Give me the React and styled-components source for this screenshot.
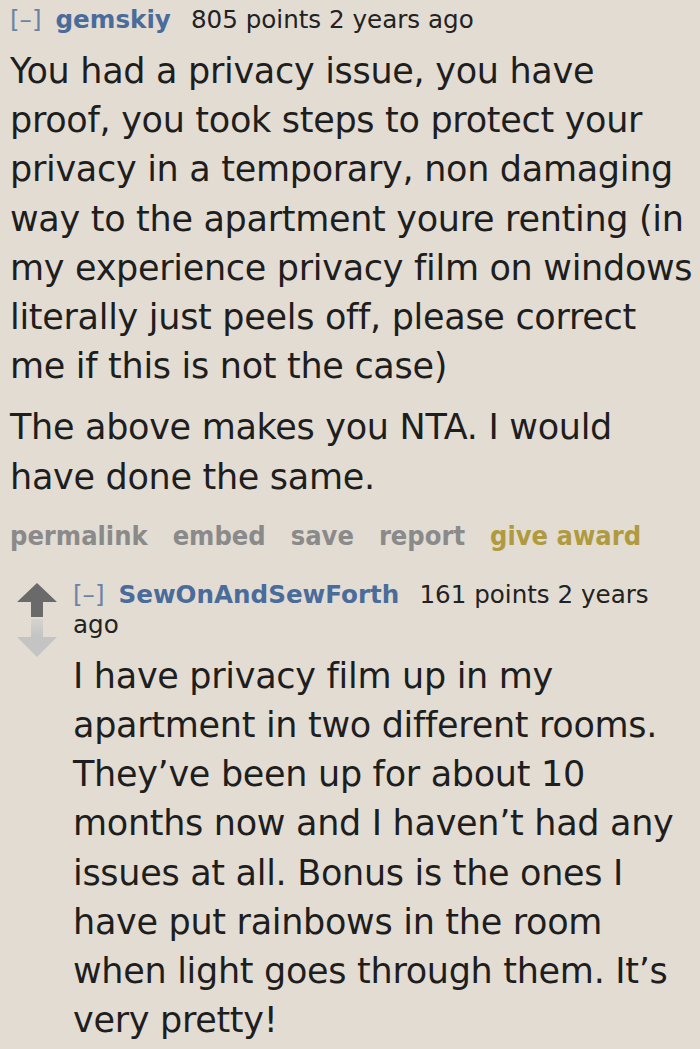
import React from "react";
import styled, { createGlobalStyle } from "styled-components";

const GlobalStyle = createGlobalStyle`
	html, body {
		margin: 0;
		padding: 0;
		background: #e3dcd3;
	}
	body {
		font-family: "DejaVu Sans", Verdana, sans-serif;
		color: #222;
	}
`;

const Page = styled.div`
	width: 700px;
	min-height: 1049px;
	padding: 5px 0 0 10px;
	box-sizing: border-box;
	overflow: hidden;
`;

const Comment = styled.div`
	display: flex;
`;

const Votes = styled.div`
	flex: 0 0 73px;
	display: flex;
	flex-direction: column;
	align-items: center;
	padding-top: 3px;
	gap: 2px;
`;

const Entry = styled.div`
	flex: 1;
	min-width: 0;
`;

const Tagline = styled.div`
	font-size: 24.6px;
	line-height: 30px;
	color: #222;
`;

const Toggle = styled.span`
	color: #6b84a6;
	margin-right: 14px;
`;

const Author = styled.span`
	color: #4a6c9b;
	font-weight: bold;
	margin-right: 20px;
`;

const Body = styled.div`
	font-size: 35px;
	letter-spacing: -0.3px;
	line-height: 49.2px;
	color: #1e1e1e;
	margin-top: 12px;

	p {
		margin: 0;
	}
	p + p {
		margin-top: 12px;
	}
`;

const Buttons = styled.ul`
	list-style: none;
	margin: 16px 0 0;
	padding: 0;
	display: flex;
	gap: 25px;
	font-family: "DejaVu Sans Condensed", "DejaVu Sans", sans-serif;
	font-weight: bold;
	font-size: 27px;
	line-height: 36px;
`;

const Button = styled.li`
	color: ${({ $gold }) => ($gold ? "#b09a40" : "#8a8a8a")};
`;

const Child = styled.div`
	margin: 26px 0 0 -10px;
`;

function Arrow({ down }) {
	if (down) {
		return (
			<svg width="40" height="38" viewBox="0 0 40 38">
				<defs>
					<linearGradient id="fade" x1="0" y1="0" x2="0" y2="1">
						<stop offset="0" stopColor="#d6d4d0" />
						<stop offset="0.45" stopColor="#c4c4c4" />
						<stop offset="1" stopColor="#c4c4c4" />
					</linearGradient>
				</defs>
				<path d="M14 0 H26 V18 H40 L20 38 L0 18 H14 Z" fill="url(#fade)" />
			</svg>
		);
	}
	return (
		<svg width="40" height="34" viewBox="0 0 40 34">
			<path d="M20 0 L40 19 H26 V34 H14 V19 H0 Z" fill="#6a6a6a" />
		</svg>
	);
}

export default function App() {
	return (
		<>
			<GlobalStyle />
			<Page>
				<Entry>
					<Tagline>
						<Toggle>[–]</Toggle>
						<Author>gemskiy</Author>
						805 points 2 years ago
					</Tagline>
					<Body>
						<p>
							You had a privacy issue, you have proof, you took steps to
							protect your privacy in a temporary, non damaging way to the
							apartment youre renting (in my experience privacy film on
							windows literally just peels off, please correct me if this is
							not the case)
						</p>
						<p>The above makes you NTA. I would have done the same.</p>
					</Body>
					<Buttons>
						<Button>permalink</Button>
						<Button>embed</Button>
						<Button>save</Button>
						<Button>report</Button>
						<Button $gold>give award</Button>
					</Buttons>
				</Entry>
				<Child>
					<Comment>
						<Votes>
							<Arrow />
							<Arrow down />
						</Votes>
						<Entry>
							<Tagline>
								<Toggle>[–]</Toggle>
								<Author>SewOnAndSewForth</Author>
								161 points 2 years ago
							</Tagline>
							<Body>
								<p>
									I have privacy film up in my apartment in two different
									rooms. They’ve been up for about 10 months now and I
									haven’t had any issues at all. Bonus is the ones I have
									put rainbows in the room when light goes through them.
									It’s very pretty!
								</p>
							</Body>
						</Entry>
					</Comment>
				</Child>
			</Page>
		</>
	);
}
